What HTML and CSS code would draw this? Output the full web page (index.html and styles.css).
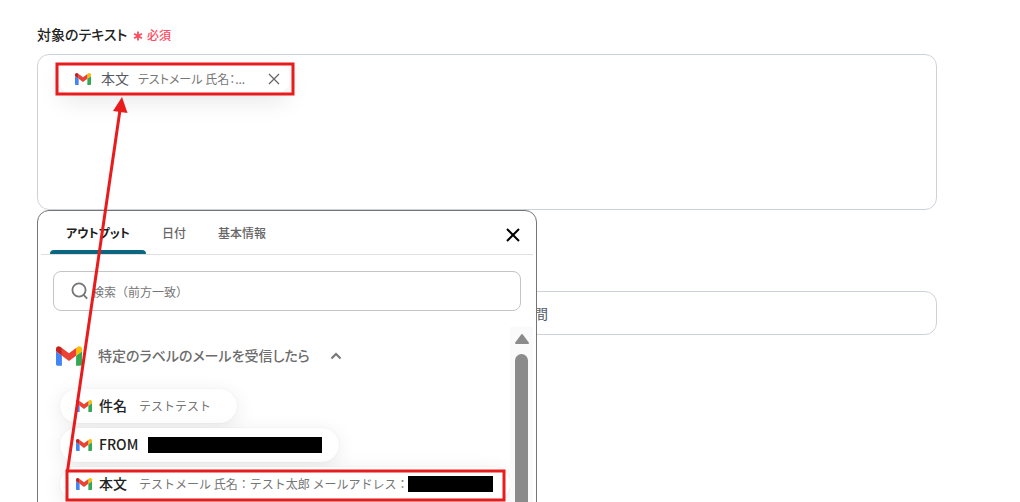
FILE: index.html
```html
<!DOCTYPE html>
<html lang="ja">
<head>
<meta charset="utf-8">
<meta name="viewport" content="width=device-width, initial-scale=1">
<title>対象のテキスト</title>
<link rel="stylesheet" href="styles.css">
</head>
<body>
<svg class="defs" aria-hidden="true">
  <symbol id="gmail" viewBox="52 42 88 66">
    <path fill="#4285f4" d="M58 108h14V74L52 59v43c0 3.32 2.69 6 6 6"/>
    <path fill="#34a853" d="M120 108h14c3.32 0 6-2.69 6-6V59l-20 15"/>
    <path fill="#fbbc04" d="M120 48v26l20-15v-8c0-7.42-8.47-11.65-14.4-7.2"/>
    <path fill="#ea4335" d="M72 74V48l24 18 24-18v26L96 92"/>
    <path fill="#c5221f" d="M52 51v8l20 15V48l-5.6-4.2c-5.94-4.45-14.4-.22-14.4 7.2"/>
  </symbol>
</svg>
<main class="page">
  <div class="field-label" id="target-label">
    <span class="field-name">対象のテキスト</span>
    <svg class="asterisk" viewBox="0 0 10 10" aria-hidden="true"><path d="M5 .5v9M1.1 2.75l7.8 4.5M8.9 2.75l-7.8 4.5"/></svg>
    <span class="required">必須</span>
  </div>
  <div class="anchor">
    <div class="text-box" role="group" aria-labelledby="target-label">
      <div class="token">
        <svg class="mail-icon" aria-hidden="true"><use href="#gmail"/></svg>
        <span class="token-name">本文</span>
        <span class="token-value">テストメール 氏名：...</span>
        <button class="token-remove" type="button" aria-label="削除">
          <svg viewBox="0 0 12 12"><path d="M1 1l10 10M11 1L1 11"/></svg>
        </button>
      </div>
    </div>

    <section class="popup" aria-label="アウトプット">
      <div class="tabs">
        <button class="tab tab-active" type="button">アウトプット</button>
        <button class="tab" type="button">日付</button>
        <button class="tab" type="button">基本情報</button>
        <button class="close" type="button" aria-label="閉じる">
          <svg viewBox="0 0 16 16"><path d="M2 2l12 12M14 2L2 14"/></svg>
        </button>
      </div>
      <label class="search">
        <svg viewBox="0 0 18 18" aria-hidden="true"><circle cx="9" cy="8" r="6.6"/><path d="M13.600 12.800l3.600 3.800"/></svg>
        <input type="text" placeholder="検索（前方一致）" aria-label="検索">
      </label>
      <div class="results">
        <div class="result-list">
          <button class="group" type="button">
            <svg class="mail-icon-large" aria-hidden="true"><use href="#gmail"/></svg>
            <span class="group-name">特定のラベルのメールを受信したら</span>
            <svg class="chevron" viewBox="0 0 12 8" aria-hidden="true"><path d="M1.500 6.500L6 2l4.500 4.500"/></svg>
          </button>
          <div class="chips">
            <button class="chip" type="button">
              <svg class="mail-icon" aria-hidden="true"><use href="#gmail"/></svg>
              <span class="chip-name">件名</span>
              <span class="chip-value">テストテスト</span>
            </button>
            <button class="chip chip-masked" type="button">
              <svg class="mail-icon" aria-hidden="true"><use href="#gmail"/></svg>
              <span class="chip-name">FROM</span>
              <span class="mask mask-long"></span>
            </button>
            <button class="chip chip-masked" type="button">
              <svg class="mail-icon" aria-hidden="true"><use href="#gmail"/></svg>
              <span class="chip-name">本文</span>
              <span class="chip-value">テストメール 氏名：テスト太郎 メールアドレス：</span>
              <span class="mask mask-short"></span>
            </button>
          </div>
        </div>
        <div class="scrollbar" aria-hidden="true">
          <svg viewBox="0 0 16 12"><path d="M8 2L14 10H2z"/></svg>
          <div class="thumb"></div>
        </div>
      </div>
    </section>
  </div>
  <input class="next-field" type="text" value="間" aria-label="時間">
  <svg class="annotation" viewBox="0 0 1020 502" aria-hidden="true">
    <rect x="57" y="64" width="236" height="30"/>
    <rect x="67" y="471" width="437" height="29"/>
    <path d="M67.500 471L120 110"/>
    <path class="arrow-head" d="M122 97l5.500 16-14.500-2z"/>
  </svg>
</main>
</body>
</html>
```
FILE: styles.css
```css
* { box-sizing: border-box; }

body {
  margin: 0;
  background: #fff;
  color: #222;
  font-family: "Noto Sans CJK JP", sans-serif;
  font-size: 14px;
}

button, input {
  font: inherit;
  color: inherit;
  border: 0;
  padding: 0;
  background: none;
}

svg { display: block; flex: none; }

.defs { position: absolute; width: 0; height: 0; }

.page {
  position: relative;
  height: 100vh;
  overflow: hidden;
  padding: 24px 83px 0 37px;
}

.field-label {
  display: flex;
  align-items: center;
  height: 20px;
  margin-bottom: 10px;
  font-feature-settings: "palt";
}

.field-name { min-width: 92px; font-weight: 500; }

.asterisk {
  width: 10px;
  height: 10px;
  margin: 3px 4px 0;
  fill: none;
  stroke: #ff4a5f;
  stroke-width: 1.8;
}

.required {
  color: #ff4a5f;
  font-size: 12px;
  font-weight: 500;
}

.anchor { position: relative; }

.text-box {
  height: 156px;
  padding: 9px 20px;
  border: 1px solid #cdd2da;
  border-radius: 12px;
}

.token {
  display: inline-flex;
  align-items: center;
  height: 30px;
  padding: 0 10px 0 17px;
  border-radius: 15px;
  background: #fff;
  box-shadow: 0 8px 24px rgba(0, 0, 0, .09);
  font-feature-settings: "palt";
  white-space: nowrap;
}

.mail-icon { width: 16px; height: 12px; }

.token-name, .token-value, .group-name, .chip-name, .chip-value { padding-bottom: 2px; }

.token-name { margin: 0 9px 0 10px; color: #555a66; }

.token-value { min-width: 113px; color: #777; font-size: 12px; }

.token-remove { margin-left: 17px; }

.token-remove svg {
  width: 12px;
  height: 12px;
  fill: none;
  stroke: #666;
  stroke-width: 1.3;
}

.popup {
  position: absolute;
  z-index: 1;
  top: 100%;
  left: 0;
  width: 500px;
  height: 340px;
  border: 1px solid #757579;
  border-radius: 12px;
  background: #fff;
  overflow: hidden;
}

.tabs {
  display: flex;
  height: 44px;
  margin: 0 3px;
  padding: 0 9px;
  border-bottom: 1px solid #e0e0e0;
}

.tab {
  position: relative;
  padding: 0 16px;
  color: #666;
  font-size: 12px;
  font-weight: 500;
  font-feature-settings: "palt";
}

.tab-active { color: #1c1c1c; font-weight: 700; }

.tab-active::after {
  content: "";
  position: absolute;
  right: 0;
  bottom: 0;
  left: 0;
  height: 4px;
  border-radius: 4px 4px 0 0;
  background: #0b6681;
}

.close { margin: 4px 3px 0 auto; }

.close svg {
  width: 16px;
  height: 16px;
  fill: none;
  stroke: #000;
  stroke-width: 2;
}

.search {
  display: flex;
  align-items: center;
  gap: 4px;
  height: 40px;
  margin: 16px 15px;
  padding: 0 16px;
  border: 1px solid #c4c4c4;
  border-radius: 8px;
}

.search svg {
  width: 18px;
  height: 18px;
  fill: none;
  stroke: #757575;
  stroke-width: 1.8;
}

.search input { flex: 1; min-width: 0; font-size: 12px; }

.search input::placeholder { color: #757575; opacity: 1; }

.results { display: flex; height: 240px; margin-right: 3px; }

.result-list { flex: 1; min-width: 0; padding: 18px 0 0 18px; }

.group {
  display: flex;
  align-items: center;
  height: 22px;
  color: #6c6c6c;
  font-weight: 500;
  font-feature-settings: "palt";
}

.mail-icon-large { width: 26px; height: 20px; margin-right: 16px; }

.group-name { min-width: 218px; text-align: left; }

.chevron {
  width: 12px;
  height: 8px;
  margin-left: 14px;
  fill: none;
  stroke: #757575;
  stroke-width: 2;
}

.chips {
  display: flex;
  flex-direction: column;
  align-items: flex-start;
  gap: 5px;
  padding: 22px 0 0 4px;
}

.chip {
  display: flex;
  align-items: center;
  height: 34px;
  padding: 0 26px 0 16px;
  border-radius: 17px;
  background: #fff;
  box-shadow: 0 4px 20px rgba(0, 0, 0, .09), 0 0 2px rgba(0, 0, 0, .06);
  white-space: nowrap;
}

.chip-masked { padding-right: 17px; }

.chip-name { margin-left: 7px; font-weight: 500; }

.chip-value { margin-left: 12px; color: #757575; font-size: 12px; }

.mask { height: 16px; background: #000; }

.mask-long { width: 174px; margin-left: 10px; }

.mask-short { width: 85px; }

.scrollbar {
  display: flex;
  flex: none;
  flex-direction: column;
  align-items: center;
  gap: 9px;
  width: 23px;
  padding-top: 6px;
  background: #fafafa;
}

.scrollbar svg {
  width: 16px;
  height: 12px;
  fill: #8b8b8b;
  stroke: #8b8b8b;
  stroke-width: 2;
  stroke-linejoin: round;
}

.thumb { flex: 1; width: 13px; border-radius: 7px; background: #8b8b8b; }

.next-field {
  display: block;
  width: 100%;
  height: 44px;
  margin-top: 81px;
  padding: 0 16px 0 496px;
  border: 1px solid #cdd2da;
  border-radius: 12px;
  color: #555a66;
}

.annotation {
  position: absolute;
  z-index: 2;
  top: 0;
  left: 0;
  width: 1020px;
  height: 502px;
  fill: none;
  stroke: #e81c1c;
  stroke-width: 3;
  pointer-events: none;
}

.arrow-head { fill: #e81c1c; stroke: none; }
```
